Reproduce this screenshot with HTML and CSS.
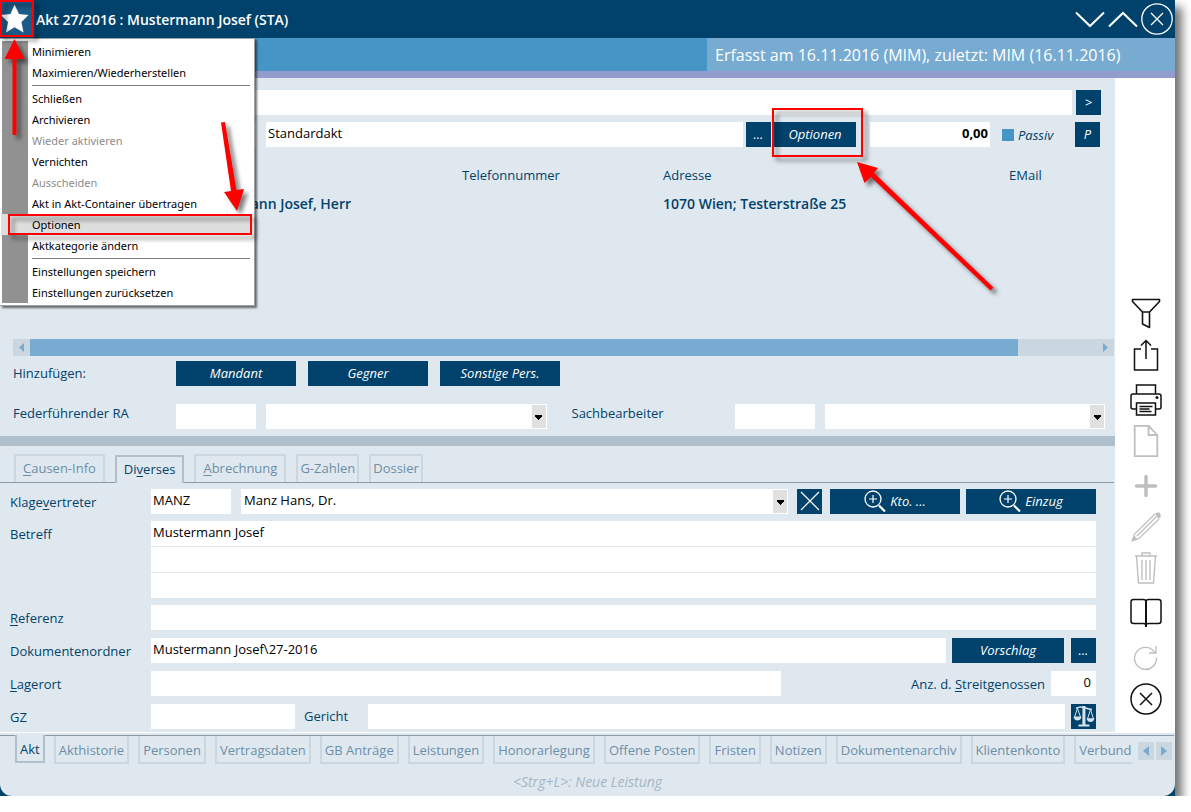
FILE: index.html
```html
<!DOCTYPE html>
<html lang="de">
<head>
<meta charset="utf-8">
<title>Akt 27/2016 : Mustermann Josef (STA)</title>
<link rel="stylesheet" href="styles.css">
</head>
<body>
<div class="window">
  <header class="titlebar">
    <button class="star" aria-label="Systemmenü">
      <svg width="28" height="30" viewBox="0 0 28 30"><path d="M13.500 .500l4.500 9.500 9.500 1-7 7 2 10.500-9-5.300-8.500 5.300 2-10.500-7-7 9.500-1z" fill="#fff"/></svg>
    </button>
    <h1>Akt 27/2016 : Mustermann Josef (STA)</h1>
    <div class="winctl">
      <button aria-label="Minimieren"><svg width="30" height="32" viewBox="0 0 30 32"><path d="M1 9.500l14 13.500 14-13.500" fill="none" stroke="#fff" stroke-width="2"/></svg></button>
      <button aria-label="Maximieren"><svg width="30" height="32" viewBox="0 0 30 32"><path d="M1 23.500l14-13.500 14 13.500" fill="none" stroke="#fff" stroke-width="2"/></svg></button>
      <button aria-label="Schließen"><svg width="32" height="32" viewBox="0 0 32 32"><g fill="none" stroke="#fff" stroke-width="1.300"><circle cx="16" cy="16" r="15.200"/><path d="M10 10l12 12M22 10l-12 12"/></g></svg></button>
    </div>
  </header>
  <div class="infobar"><p>Erfasst am 16.11.2016 (MIM), zuletzt: MIM (16.11.2016)</p></div>

  <div class="body">
    <main class="main">
      <section class="top">
        <div class="row indent">
          <input class="grow" aria-label="Bezeichnung">
          <button class="btn sq gap4">&gt;</button>
        </div>
        <div class="row indent kind">
          <input class="w80" aria-label="Kategorie-Code">
          <input class="grow ml10" aria-label="Kategorie" value="Standardakt">
          <button class="btn sq dots">...</button>
          <button class="btn opt">Optionen</button>
          <input class="amount" aria-label="Betrag" value="0,00">
          <label class="passiv"><input type="checkbox">Passiv</label>
          <button class="btn sq it">P</button>
        </div>
        <table class="persons">
          <colgroup><col class="c1"><col class="c2"><col class="c3"><col class="c4"></colgroup>
          <thead><tr><th></th><th>Telefonnummer</th><th>Adresse</th><th>EMail</th></tr></thead>
          <tbody><tr><td class="name">Mustermann Josef, Herr</td><td></td><td>1070 Wien; Testerstraße 25</td><td></td></tr></tbody>
        </table>
        <div class="hscroll">
          <button aria-label="Nach links"><svg width="5" height="9"><path d="M5 0v9l-5-4.500z" fill="#78abd1"/></svg></button>
          <div class="track"><div class="thumb"></div></div>
          <button aria-label="Nach rechts"><svg width="5" height="9"><path d="M0 0v9l5-4.500z" fill="#78abd1"/></svg></button>
        </div>
        <div class="row add">
          <span class="lab">Hinzufügen:</span>
          <button class="btn w120">Mandant</button>
          <button class="btn w120">Gegner</button>
          <button class="btn w120">Sonstige Pers.</button>
        </div>
        <div class="row lead">
          <label class="lab" for="ra">Federführender RA</label>
          <input class="w80" id="ra">
          <span class="combo grow ml10"><select aria-label="Name RA"><option></option></select></span>
          <label class="lab2" for="sb">Sachbearbeiter</label>
          <input class="w80" id="sb">
          <span class="combo grow ml10"><select aria-label="Name Sachbearbeiter"><option></option></select></span>
        </div>
      </section>
      <div class="splitter"></div>
      <section class="bottom">
        <nav class="tabs">
          <button><u>C</u>ausen-Info</button>
          <button class="active">Di<u>v</u>erses</button>
          <button><u>A</u>brechnung</button>
          <button class="slim">G-Zahlen</button>
          <button class="slim">Dossier</button>
        </nav>
        <div class="form">
          <div class="row">
            <label class="flab" for="kv">Klage<u>v</u>ertreter</label>
            <input class="w80" id="kv" value="MANZ">
            <span class="combo grow ml10"><select aria-label="Name Klagevertreter"><option>Manz Hans, Dr.</option></select></span>
            <button class="btn sq clear" aria-label="Leeren"><svg width="20" height="20" viewBox="0 0 20 20"><path d="M1 1l18 18M19 1l-18 18" stroke="#fff" stroke-width="1.200"/></svg></button>
            <button class="btn look ml8"><svg width="22" height="23" viewBox="0 0 22 23"><g fill="none" stroke="#fff"><circle cx="9" cy="9" r="8" stroke-width="1.300"/><path d="M5 9h8M9 5v8" stroke-width="1.200"/><path d="M15 15.500l6 6" stroke-width="2.200"/></g></svg>Kto. ...</button>
            <button class="btn look ml6"><svg width="22" height="23" viewBox="0 0 22 23"><g fill="none" stroke="#fff"><circle cx="9" cy="9" r="8" stroke-width="1.300"/><path d="M5 9h8M9 5v8" stroke-width="1.200"/><path d="M15 15.500l6 6" stroke-width="2.200"/></g></svg>Einzug</button>
          </div>
          <div class="row subject">
            <label class="flab" for="be">Betreff</label>
            <div class="stack grow">
              <input id="be" value="Mustermann Josef">
              <input aria-label="Betreff Zeile 2">
              <input aria-label="Betreff Zeile 3">
            </div>
          </div>
          <div class="row">
            <label class="flab" for="rf"><u>R</u>eferenz</label>
            <input class="grow" id="rf">
          </div>
          <div class="row wide">
            <label class="flab" for="dok">Dokumentenordner</label>
            <input class="grow" id="dok" value="Mustermann Josef\27-2016">
            <button class="btn prop ml6">Vorschlag</button>
            <button class="btn sq ml7">...</button>
          </div>
          <div class="row wide">
            <label class="flab" for="lo"><u>L</u>agerort</label>
            <input class="store" id="lo">
            <label class="count" for="an">Anz. d. <u>S</u>treitgenossen</label>
            <input class="num" id="an" value="0">
          </div>
          <div class="row wide">
            <label class="flab" for="gz">GZ</label>
            <input class="gz" id="gz">
            <label class="court" for="ge">Gericht</label>
            <input class="grow" id="ge">
            <button class="btn sq ml6" aria-label="Gericht suchen"><svg width="22" height="22" viewBox="0 0 22 22"><g fill="none" stroke="#d5e3ee"><path d="M3 3.500q4-2.500 8-1t8 2" stroke-width="1.500"/><path d="M10.900 1v19" stroke-width="3"/><path d="M5.500 20.500h11" stroke-width="2"/><path d="M4.500 3.500L1.500 12h6zM17.500 4.500L14.500 14h6z" stroke-width="1"/></g><path d="M.500 12h8q-1 3.500-4 3.500t-4-3.500zM13.500 13.500h8q-1 3.500-4 3.500t-4-3.500z" fill="#d5e3ee"/></svg></button>
          </div>
        </div>
      </section>
    </main>
    <aside class="tools">
      <button class="first" aria-label="Filter"><svg width="32" height="32" viewBox="0 0 32 32"><g fill="none" stroke="#111" stroke-width="1.600" stroke-linejoin="round"><path d="M2.500 1.500h27v2L19.500 14h-7L2.500 3.500z"/><path d="M12.500 14v12l7 3.500V14"/></g></svg></button>
      <button aria-label="Exportieren"><svg width="32" height="32" viewBox="0 0 32 32"><g fill="none" stroke="#111" stroke-width="1.500"><path d="M11 10H4.500v21h23V10H21M16 20V1.500M11 6.500l5-5 5 5"/></g></svg></button>
      <button class="group" aria-label="Drucken"><svg width="32" height="32" viewBox="0 0 32 32"><g fill="none" stroke="#111" stroke-width="1.500"><path d="M6.500 10V1h19v9M6.500 25H3q-2 0-2-2V12q0-2 2-2h26q2 0 2 2v11q0 2-2 2h-3.500M6.500 19h19v12h-19z"/><path d="M9.500 22.500h13M9.500 25h10M9.500 27.500h12"/></g><circle cx="27" cy="13.500" r="1.500" fill="#111"/></svg></button>
      <button class="off" aria-label="Neues Dokument"><svg width="32" height="32" viewBox="0 0 32 32"><path d="M5 .800h13.500L27.300 10v21.200H4.700V.800h13.800V10h8.800" fill="none" stroke="#bfbfbf" stroke-width="1.800"/></svg></button>
      <button class="group off" aria-label="Hinzufügen"><svg width="32" height="32" viewBox="0 0 32 32"><path d="M16 6.500v19M6.500 16h19" stroke="#bfbfbf" stroke-width="3.500" stroke-linecap="round"/></svg></button>
      <button class="off" aria-label="Bearbeiten"><svg width="32" height="32" viewBox="0 0 32 32"><path d="M2 30l2.500-7L25 3M2 30l7-2.500L29 8M7 25L27 5" fill="none" stroke="#bfbfbf" stroke-width="1.200"/><path d="M25 3q3-3 5-.5t-1 5.500zM1.500 30.500l2.500-6 4 4z" fill="#bfbfbf"/></svg></button>
      <button class="off" aria-label="Löschen"><svg width="32" height="32" viewBox="0 0 32 32"><g fill="none" stroke="#bfbfbf" stroke-width="1.400"><path d="M5 4h22M12 4V1h8v3M6.500 4l2 27h15l2-27M12 8v20M16 8v20M20 8v20"/></g></svg></button>
      <button class="group" aria-label="Buch"><svg width="32" height="32" viewBox="0 0 32 32"><g fill="none" stroke="#111" stroke-width="1.500"><path d="M16 3.500q-1-1-3-1H3.500q-2.500 0-2.500 2.500v19q0 2.500 2.500 2.500H13q2 0 3 1 1-1 3-1h9.500q2.500 0 2.500-2.500V5q0-2.500-2.500-2.500H19q-2 0-3 1z"/><path d="M16 3v27" stroke-width="2"/></g></svg></button>
      <button class="group off" aria-label="Aktualisieren"><svg width="32" height="32" viewBox="0 0 32 32"><path d="M26.500 15.500A11 11 0 1 1 24.500 10M26 4v7h-7" fill="none" stroke="#bfbfbf" stroke-width="1.400"/></svg></button>
      <button aria-label="Schließen"><svg width="32" height="32" viewBox="0 0 32 32"><g fill="none" stroke="#111" stroke-width="1.500"><circle cx="16" cy="16" r="15"/><path d="M10 10l12 12M22 10L10 22"/></g></svg></button>
    </aside>
  </div>

  <footer class="footer">
    <div class="pagebar">
      <nav class="pages">
        <button class="active">Akt</button><button>Akthistorie</button><button>Personen</button><button>Vertragsdaten</button><button>GB Anträge</button><button>Leistungen</button><button>Honorarlegung</button><button>Offene Posten</button><button>Fristen</button><button>Notizen</button><button>Dokumentenarchiv</button><button>Klientenkonto</button><button>Verbund</button>
      </nav>
      <div class="pager">
        <button aria-label="Zurück"><svg width="6" height="10"><path d="M6 0v10l-6-5z" fill="#78abd1"/></svg></button>
        <button aria-label="Weiter"><svg width="6" height="10"><path d="M0 0v10l6-5z" fill="#78abd1"/></svg></button>
      </div>
    </div>
    <p class="hint">&lt;Strg+L&gt;: Neue Leistung</p>
  </footer>
</div>

<div class="menu" role="menu">
  <button role="menuitem">Minimieren</button>
  <button role="menuitem">Maximieren/Wiederherstellen</button>
  <hr>
  <button role="menuitem">Schließen</button>
  <button role="menuitem">Archivieren</button>
  <button role="menuitem" disabled>Wieder aktivieren</button>
  <button role="menuitem">Vernichten</button>
  <button role="menuitem" disabled>Ausscheiden</button>
  <button role="menuitem">Akt in Akt-Container übertragen</button>
  <button role="menuitem" class="hover">Optionen</button>
  <button role="menuitem">Aktkategorie ändern</button>
  <hr>
  <button role="menuitem">Einstellungen speichern</button>
  <button role="menuitem">Einstellungen zurücksetzen</button>
</div>

<svg class="marks" width="1010" height="310" viewBox="0 0 1010 310" aria-hidden="true">
  <g fill="none" stroke="#f00" stroke-width="2">
    <path d="M1 1h32v35H1z"/><path d="M9 215h242v19H9z"/><path d="M773 109h89v47h-89z"/>
  </g>
  <g fill="#f00">
    <path d="M14.500 39l10 20h-8v76h-4V59h-8z"/>
    <path d="M221 122.500l4-.5 11.500 68 7.500-1-7 22-13-19 7-1z"/>
    <path d="M857 162l21 6-4 5 119.500 114.500-3 3L871 177l-6.500 6z"/>
  </g>
</svg>
</body>
</html>
```
FILE: styles.css
```css
* { box-sizing: border-box; }
body {
  margin: 0;
  background: #fff;
  color: #00426b;
  font: 13px/18px "Open Sans", "Noto Sans", sans-serif;
}
button, input, select { font: inherit; color: inherit; border: 0; border-radius: 0; margin: 0; padding: 0; }
button { background: none; }
svg { display: block; }
u { text-underline-offset: 2px; }

.window {
  display: flex;
  flex-direction: column;
  min-height: calc(100vh - 16px);
  margin-right: 16px;
  background: #00426b;
  box-shadow: 7px 7px 9px rgba(0, 0, 0, .55);
}
.titlebar { display: flex; align-items: center; height: 38px; padding-right: 2px; }
.star { display: flex; align-items: center; width: 33px; height: 34px; padding-left: 1px; background: #1d5a87; }
.titlebar h1 { flex: 1; margin: 0 0 0 3px; font-size: 14px; font-weight: 600; color: #fff; padding-top: 2px; }
.winctl { display: flex; gap: 3px; }
.infobar {
  display: flex;
  justify-content: flex-end;
  height: 40px;
  background: #4596c7;
  border-bottom: 7px solid #929dce;
}
.infobar p { width: 468px; margin: 0; padding-left: 8px; background: #78abd1; color: #fff; font-size: 16px; line-height: 35px; white-space: nowrap; }

.body { flex: 1; display: flex; background: #e0e8ef; }
.main { flex: 1; min-width: 0; display: flex; flex-direction: column; }
.top { flex: 1; display: flex; flex-direction: column; padding: 12px 0 7px 13px; }
.row { display: flex; align-items: flex-start; }
.row > *, .stack > * { flex-shrink: 0; }
.row > .grow { flex: 1; min-width: 0; }
.indent { padding: 0 14px 0 163px; }
.kind { margin-top: 7px; padding-right: 15px; }

input:not([type]) { height: 25px; padding: 0 2px 4px; background: #fff; color: #000; min-width: 0; }
.w80 { width: 80px; }
.w120 { width: 120px; }
.ml10 { margin-left: 10px; }
.ml8 { margin-left: 8px; }
.ml7 { margin-left: 7px; }
.ml6 { margin-left: 6px; }
.gap4 { margin-left: 4px; }

.btn {
  display: flex;
  justify-content: center;
  align-items: center;
  height: 25px;
  padding-bottom: 1px;
  background: #00426b;
  color: #fff;
  font-style: italic;
}
.sq { width: 25px; }
.dots { margin-left: 3px; }
.opt { width: 82px; margin-left: 3px; }
input.amount { width: 120px; margin-left: 14px; text-align: right; font-weight: 700; }
.passiv { display: flex; align-items: center; gap: 4px; width: 73px; height: 25px; margin-left: 12px; font-style: italic; }
.passiv input { appearance: none; width: 12px; height: 12px; background: #4596c7; }

.persons { width: 100%; margin-top: 13px; border-collapse: collapse; table-layout: fixed; }
.persons th, .persons td { height: 29px; padding: 0; text-align: left; vertical-align: middle; white-space: nowrap; font-weight: 400; }
.persons tbody td { font-size: 14px; font-weight: 600; }
.c1 { width: 449px; }
.c2 { width: 201px; }
.c3 { width: 346px; }
.persons td.name { padding-right: 111px; text-align: right; }

.hscroll { display: flex; height: 17px; margin-top: auto; margin-right: 1px; background: #cad7e1; }
.hscroll button { display: flex; justify-content: center; align-items: center; width: 17px; }
.track { flex: 1; }
.thumb { width: 92.6%; height: 100%; background: #78abd1; }

.add { gap: 12px; margin-top: 5px; }
.lab { width: 163px; line-height: 19px; padding-top: 3px; }
.add .lab { width: 151px; }
.lead { margin-top: 18px; padding-right: 10px; }
.lead .lab, .lab2 { padding-top: 0; }
.lab2 { width: 188px; padding-left: 25px; line-height: 19px; }

.combo { position: relative; display: block; }
.combo select { display: block; appearance: none; width: 100%; height: 25px; padding: 0 20px 4px 3px; background: #fff; color: #000; }
.combo::after {
  content: "";
  position: absolute;
  top: 1px;
  right: 1px;
  width: 14px;
  height: 23px;
  background: linear-gradient(#000, #000) 50% 10px / 7px 1px no-repeat, linear-gradient(#000, #000) 50% 11px / 7px 1px no-repeat, linear-gradient(#000, #000) 50% 12px / 5px 1px no-repeat, linear-gradient(#000, #000) 50% 13px / 3px 1px no-repeat, linear-gradient(#000, #000) 50% 14px / 1px 1px no-repeat, #e0e0e0;
  pointer-events: none;
}
.splitter { height: 10px; background: #b0bfcc; }

.tabs { display: flex; align-items: flex-end; gap: 10px; height: 37px; padding-left: 14px; border-bottom: 1px solid #8c98a3; margin-right: 1px; }
.tabs button { height: 28px; padding: 0 7px 2px; border: 2px solid #cad7e1; border-bottom: 0; color: #6b8ea8; }
.tabs .slim { padding: 0 2px 2px; }
.tabs .active { margin-bottom: -1px; border-color: #b0bfcc; background: #e0e8ef; color: #00426b; }

.form { display: flex; flex-direction: column; gap: 7px; padding: 6px 19px 3px 10px; }
.form .wide { margin-top: 1px; }
.flab { width: 141px; padding-top: 4px; }
.clear { margin-left: 9px; }
.look { width: 130px; gap: 4px; }
.prop { width: 112px; }
.stack { display: flex; flex-direction: column; gap: 1px; }
.store { width: 630px; }
.count { flex: 1; padding: 4px 6px 0 0; text-align: right; }
.form input.num { width: 45px; text-align: right; padding-right: 5px; }
.gz { width: 144px; }
.court { width: 73px; padding: 3px 0 0 9px; }

.tools { width: 60px; display: flex; flex-direction: column; align-items: center; justify-content: flex-end; padding: 0 0 13px 2px; background: #fff; }
.tools button { display: flex; align-items: center; height: 41px; }
.tools .group { margin-top: 4px; }

.footer { background: #e0e8ef; border-top: 1px solid #fff; padding-top: 2px; border-radius: 0 0 12px 12px; }
.pagebar { display: flex; border-top: 1px solid #8c98a3; margin-right: 1px; }
.pages { flex: 1; min-width: 0; overflow: hidden; display: flex; align-items: flex-start; gap: 9px; padding-left: 15px; margin-top: -1px; margin-right: 6px; }
.pages button { flex: none; height: 28px; margin-top: 1px; padding: 2px 3px 0; border: 2px solid #cad7e1; border-top: 0; color: #6b8ea8; }
.pages .active { height: 28px; margin-top: 0; border-color: #b0bfcc; background: #e0e8ef; color: #00426b; }
.pager { display: flex; gap: 2px; padding: 6px 2px 0 0; }
.pager button { display: flex; justify-content: center; align-items: center; width: 16px; height: 18px; background: #cad7e1; }
.hint { margin: 0; padding: 9px 0 5px; text-align: center; font-size: 14px; line-height: 18px; font-style: italic; color: #a3b4c4; }

.menu {
  position: absolute;
  top: 38px;
  left: 0;
  width: 255px;
  padding: 2px 2px 2px 1px;
  border: 1px solid #a0a0a0;
  border-left: 0;
  background: linear-gradient(#919191, #919191) 2px 2px / 26px calc(100% - 4px) no-repeat, #fff;
  box-shadow: 2px 2px 2px rgba(0, 0, 0, .55);
}
.menu button { display: block; width: 100%; height: 21px; padding-left: 31px; text-align: left; font: 11px/21px "Noto Sans", "Open Sans", sans-serif; color: #000; white-space: nowrap; }
.menu button:disabled { color: #8c8c8c; }
.menu .hover { background: #dedede; }
.menu hr { height: 1px; margin: 2px 2px 2px 31px; border: 0; background: #808080; }

.marks { position: absolute; top: 0; left: 0; pointer-events: none; filter: drop-shadow(4px 4px 2px rgba(0, 0, 0, .5)); }
```
